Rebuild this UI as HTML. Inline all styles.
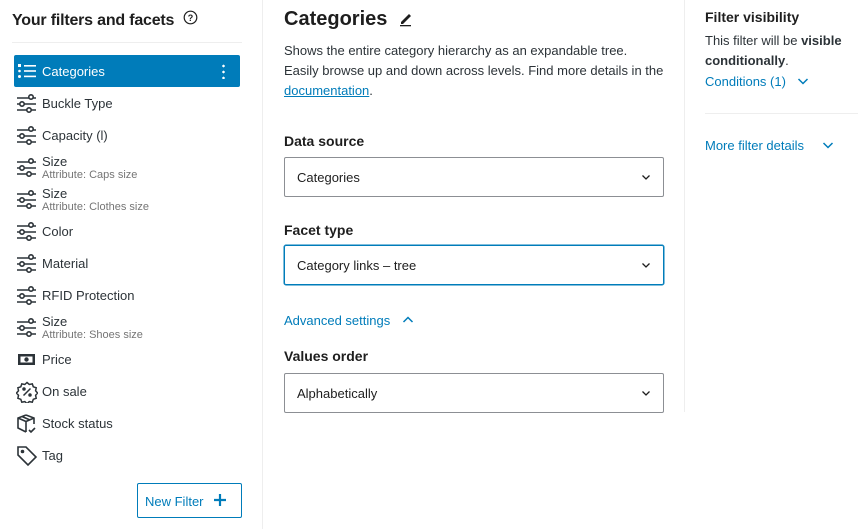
<!DOCTYPE html>
<html><head><meta charset="utf-8"><style>
*{margin:0;padding:0;box-sizing:border-box}
body{width:858px;height:529px;background:#fff;font-family:"Liberation Sans",sans-serif;color:#1e1e1e;position:relative;overflow:hidden;font-size:13px}
.a{position:absolute;white-space:nowrap}
.row{position:absolute;left:14px;width:226px;height:32px}
.row svg{position:absolute;left:2px;top:6px}
.row .t{position:absolute;left:28px;top:9px;font-size:13px;color:#2c3338}
.row .t2{position:absolute;left:28px;top:1px;font-size:13px;color:#2c3338;line-height:14px}
.row .t2 small{display:block;font-size:11px;color:#757575;line-height:13px}
.sel{position:absolute;left:284px;width:380px;height:40px;border:1px solid #8c8f94;border-radius:2px}
.sel span{position:absolute;left:12px;top:12px;font-size:13px}
.sel svg{position:absolute;right:12px;top:16px}
.lab{position:absolute;left:284px;font-weight:bold;font-size:14px}
.blue{color:#007cba}
</style></head><body>
<div class="a" style="left:12px;top:12px;font-size:16px;font-weight:bold;color:#1e1e1e;letter-spacing:-0.2px">Your filters and facets</div>
<svg class="a" style="left:183px;top:10px" width="15" height="15" viewBox="0 0 15 15"><circle cx="7.5" cy="7.5" r="6.3" fill="none" stroke="#1e1e1e" stroke-width="1.2"/><text x="7.5" y="11" font-size="9" text-anchor="middle" font-family="Liberation Sans" font-weight="bold" fill="#1e1e1e">?</text></svg>
<div class="a" style="left:12px;top:42px;width:230px;height:1px;background:#eee"></div>
<div class="a" style="left:262px;top:0;width:1px;height:529px;background:#eee"></div>
<div class="a" style="left:684px;top:0;width:1px;height:412px;background:#eee"></div>

<div class="row" style="top:55px;background:#007cba;border-radius:2px">
<svg width="22" height="20" viewBox="0 0 22 20"><rect x="2" y="3" width="3" height="3" fill="#fff"/><circle cx="3.5" cy="10" r="1.3" fill="#fff"/><circle cx="3.5" cy="15.5" r="1.5" fill="#fff"/><rect x="8" y="4" width="12" height="1.6" fill="#fff"/><rect x="8" y="9.2" width="12" height="1.6" fill="#fff"/><rect x="8" y="14.6" width="12" height="1.6" fill="#fff"/></svg>
<div class="t" style="color:#fff">Categories</div>
<div class="a" style="left:208px;top:8px;width:3px;height:16px;background:radial-gradient(circle,#fff 1.2px,transparent 1.4px) 0 0/3px 6px"></div>
</div>

<svg width="0" height="0" style="position:absolute"><defs><g id="sl" fill="none" stroke="#2c3338" stroke-width="1.6"><path d="M1 5H20M1 11H20M1 17H20"/><circle cx="15" cy="4" r="2.2" fill="#fff"/><circle cx="6" cy="11" r="2.2" fill="#fff"/><circle cx="13" cy="17" r="2.2" fill="#fff"/></g></defs></svg>

<div class="row" style="top:87px"><svg width="22" height="22"><use href="#sl"/></svg><div class="t">Buckle Type</div></div>
<div class="row" style="top:119px"><svg width="22" height="22"><use href="#sl"/></svg><div class="t">Capacity (l)</div></div>
<div class="row" style="top:151px"><svg width="22" height="22"><use href="#sl"/></svg><div class="t2" style="top:4px">Size<small>Attribute: Caps size</small></div></div>
<div class="row" style="top:183px"><svg width="22" height="22"><use href="#sl"/></svg><div class="t2" style="top:4px">Size<small>Attribute: Clothes size</small></div></div>
<div class="row" style="top:215px"><svg width="22" height="22"><use href="#sl"/></svg><div class="t">Color</div></div>
<div class="row" style="top:247px"><svg width="22" height="22"><use href="#sl"/></svg><div class="t">Material</div></div>
<div class="row" style="top:279px"><svg width="22" height="22"><use href="#sl"/></svg><div class="t">RFID Protection</div></div>
<div class="row" style="top:311px"><svg width="22" height="22"><use href="#sl"/></svg><div class="t2" style="top:4px">Size<small>Attribute: Shoes size</small></div></div>
<div class="row" style="top:343px"><svg width="22" height="22" viewBox="0 0 22 22"><rect x="2" y="5" width="17" height="11" fill="#2c3338"/><rect x="4.5" y="7.5" width="12" height="6" fill="#fff"/><circle cx="10.5" cy="10.5" r="2.2" fill="#2c3338"/></svg><div class="t">Price</div></div>
<div class="row" style="top:375px"><svg width="22" height="22" viewBox="0 0 22 22" fill="none" stroke="#2c3338" stroke-width="1.5"><path d="M11 1.5l2.3 2 3-.6 1 2.9 2.9 1-.6 3 2 2.2-2 2.3.6 3-2.9 1-1 2.9-3-.6-2.3 2-2.2-2-3 .6-1-2.9-2.9-1 .6-3-2-2.300 2-2.2-.6-3 2.9-1 1-2.9 3 .6z"/><path d="M7.5 14.5l7-7"/><circle cx="8" cy="8" r="1" fill="#2c3338"/><circle cx="14" cy="14" r="1" fill="#2c3338"/></svg><div class="t">On sale</div></div>
<div class="row" style="top:407px"><svg width="22" height="22" viewBox="0 0 22 22" fill="none" stroke="#2c3338" stroke-width="1.6"><path d="M10 2l8 3v6M10 2L2 5v10l8 4M2 5l8 3.5 8-3.5M10 8.5V19M6 3.5l8 3.5"/><path d="M13 17l2 2 4-4"/></svg><div class="t">Stock status</div></div>
<div class="row" style="top:439px"><svg width="22" height="22" viewBox="0 0 22 22" fill="none" stroke="#2c3338" stroke-width="1.6"><path d="M2 2h8l10 10-8 8L2 10z"/><circle cx="6.5" cy="6.5" r="1" fill="#2c3338"/></svg><div class="t">Tag</div></div>

<div class="a" style="left:137px;top:483px;width:105px;height:35px;border:1px solid #007cba;border-radius:2px"></div>
<div class="a blue" style="left:145px;top:494px;font-size:13px">New Filter</div>
<svg class="a" style="left:214px;top:494px" width="12" height="12"><path d="M6 0v12M0 6h12" stroke="#007cba" stroke-width="2.2"/></svg>

<div class="a" style="left:284px;top:8px;font-size:20px;font-weight:bold">Categories</div>
<svg class="a" style="left:399px;top:11px" width="14" height="16" viewBox="0 0 14 16"><path d="M2 11L10 3l2 2-8 8H2z" fill="#1e1e1e"/><rect x="1" y="14" width="11" height="1.3" fill="#1e1e1e"/></svg>
<div class="a" style="left:284px;top:41px;font-size:13px;line-height:20px;color:#2c3338">Shows the entire category hierarchy as an expandable tree.<br>Easily browse up and down across levels. Find more details in the<br><span class="blue" style="text-decoration:underline">documentation</span>.</div>

<div class="lab" style="top:133px">Data source</div>
<div class="sel" style="top:157px"><span>Categories</span><svg width="10" height="7"><path d="M1.5 1.5l3.5 3.5 3.5-3.5" fill="none" stroke="#1e1e1e" stroke-width="1.3"/></svg></div>
<div class="lab" style="top:222px">Facet type</div>
<div class="sel" style="top:245px;border-color:#007cba;box-shadow:0 0 0 .5px #007cba"><span>Category links – tree</span><svg width="10" height="7"><path d="M1.5 1.5l3.5 3.5 3.5-3.5" fill="none" stroke="#1e1e1e" stroke-width="1.3"/></svg></div>
<div class="a blue" style="left:284px;top:313px;font-size:13px">Advanced settings</div>
<svg class="a" style="left:402px;top:316px" width="12" height="8"><path d="M1.5 6l4.5-4.5 4.5 4.5" fill="none" stroke="#007cba" stroke-width="1.5"/></svg>
<div class="lab" style="top:348px">Values order</div>
<div class="sel" style="top:373px"><span>Alphabetically</span><svg width="10" height="7"><path d="M1.5 1.5l3.5 3.5 3.5-3.5" fill="none" stroke="#1e1e1e" stroke-width="1.3"/></svg></div>

<div class="a" style="left:705px;top:9px;font-size:14px;font-weight:bold">Filter visibility</div>
<div class="a" style="left:705px;top:31px;font-size:13px;line-height:20px;color:#2c3338">This filter will be <b>visible</b><br><b>conditionally</b>.</div>
<div class="a blue" style="left:705px;top:74px;font-size:13px">Conditions (1)</div>
<svg class="a" style="left:797px;top:77px" width="12" height="8"><path d="M1.5 2l4.5 4.5 4.5-4.5" fill="none" stroke="#007cba" stroke-width="1.5"/></svg>
<div class="a" style="left:705px;top:113px;width:153px;height:1px;background:#eee"></div>
<div class="a blue" style="left:705px;top:138px;font-size:13px">More filter details</div>
<svg class="a" style="left:822px;top:141px" width="12" height="8"><path d="M1.5 2l4.5 4.5 4.5-4.5" fill="none" stroke="#007cba" stroke-width="1.5"/></svg>
</body></html>
